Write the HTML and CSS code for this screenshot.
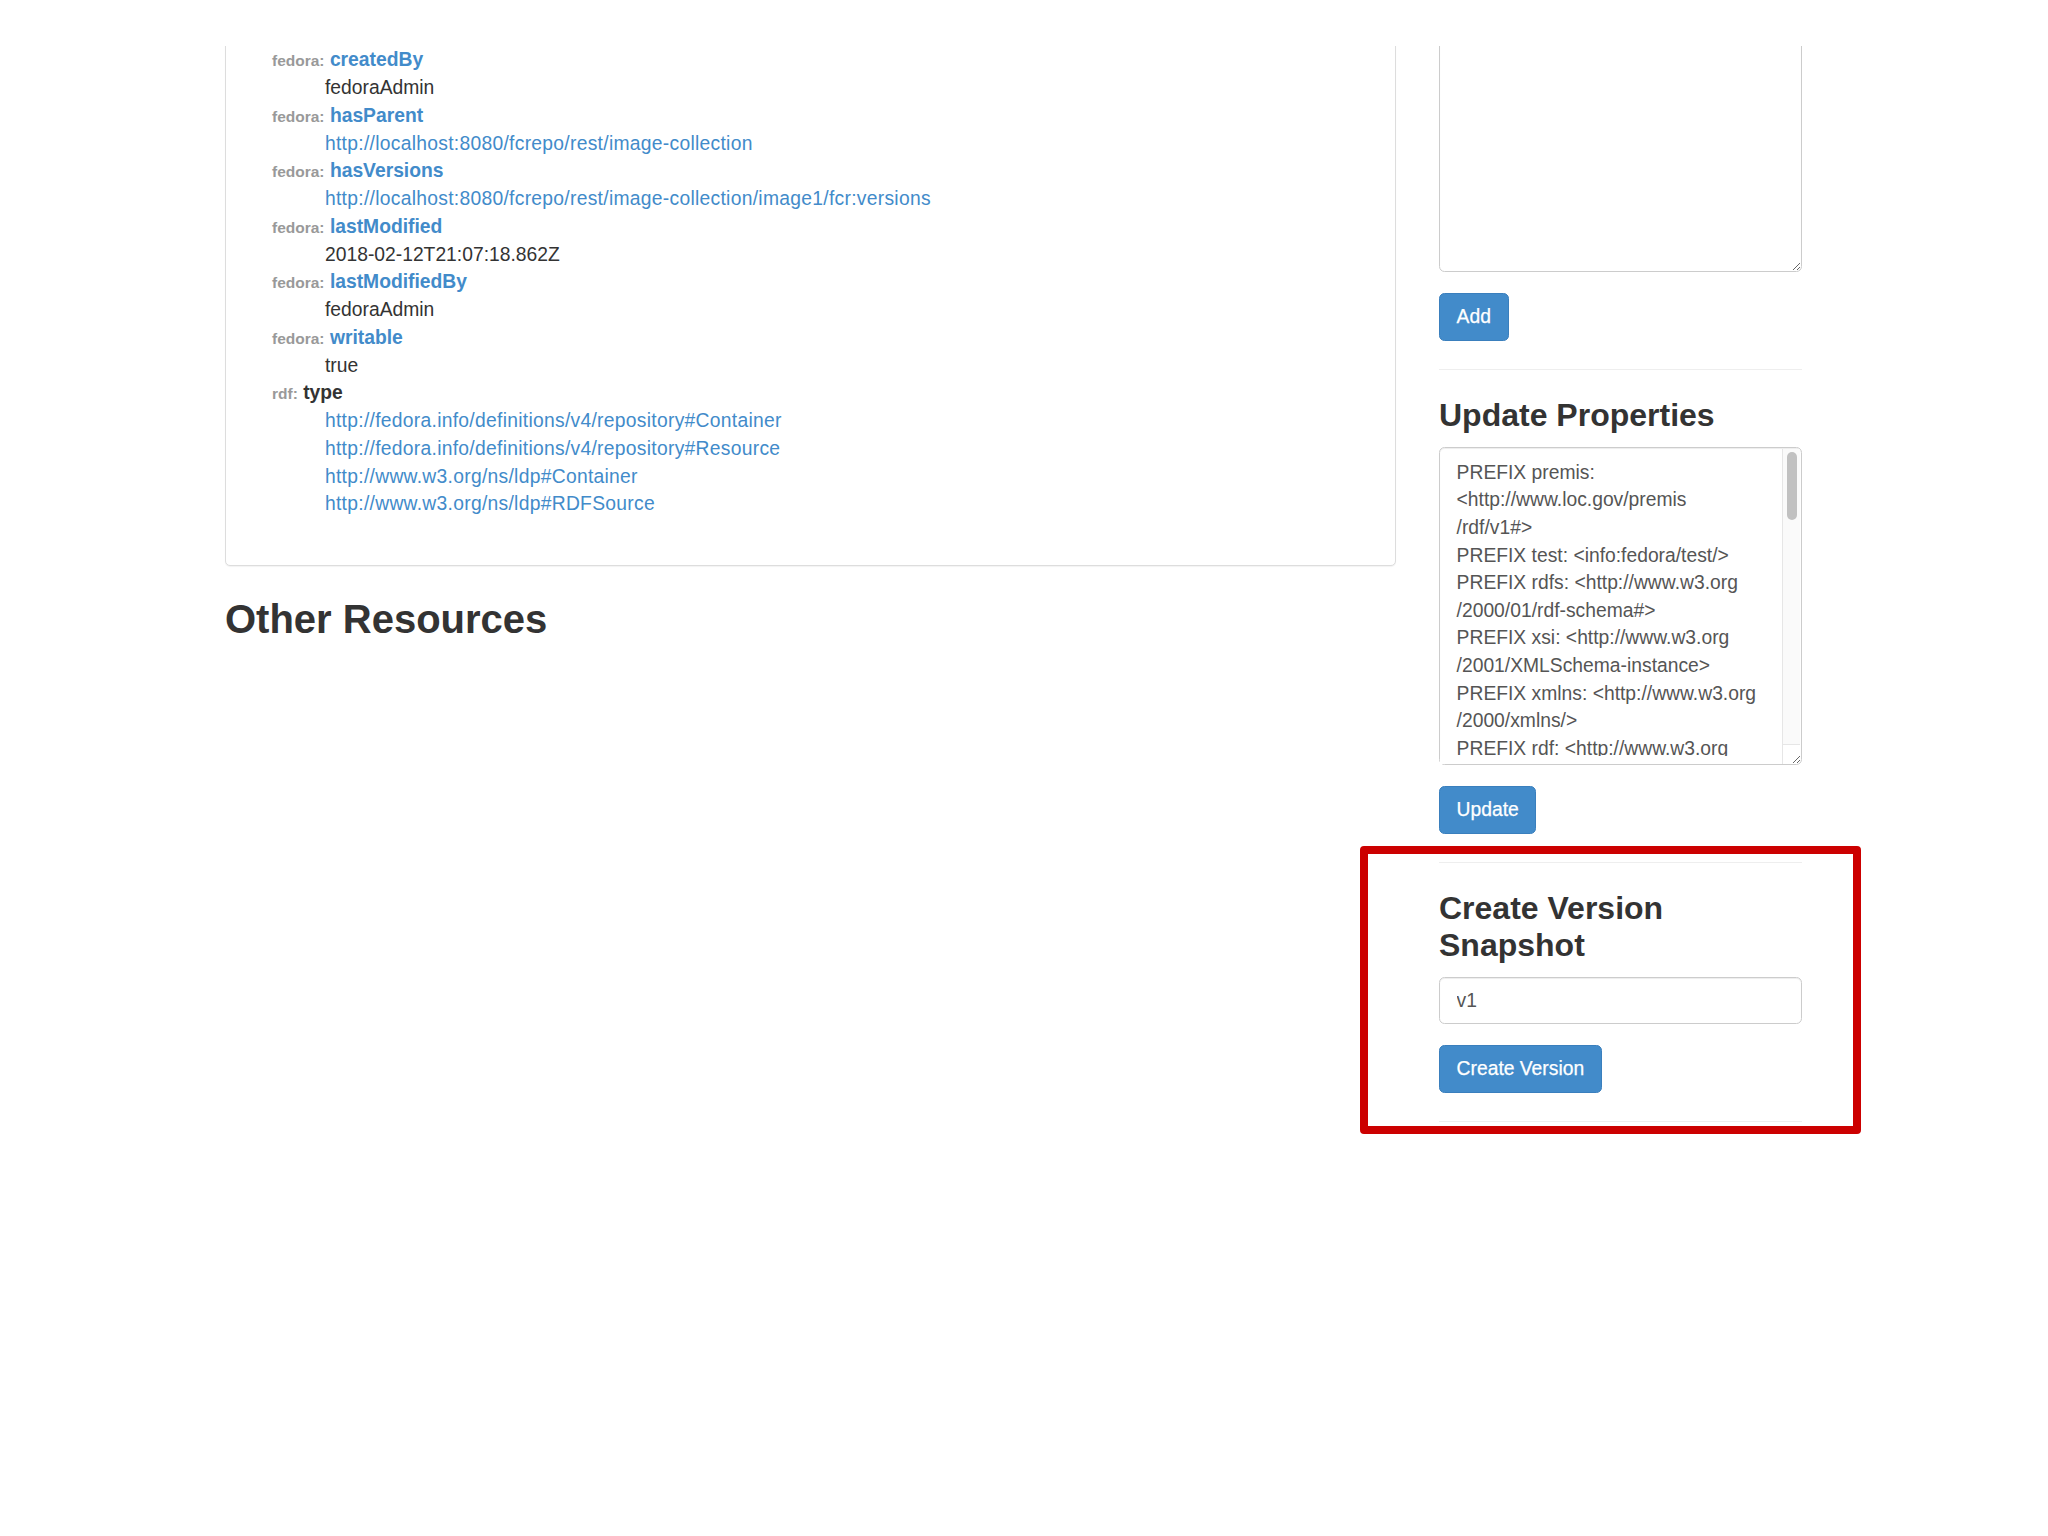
FILE: index.html
```html
<!DOCTYPE html>
<html lang="en">
<head>
  <meta charset="UTF-8" />
  <meta name="viewport" content="width=device-width, initial-scale=1.0"/>
  <title>image1 - Fedora</title>
  <link rel="stylesheet" href="styles.css">
</head>
<body>
  <div class="topbar"></div>

  <div class="page">
    <div class="main">
      <div class="panel">
        <div class="panel-body">
          <dl class="props">
            <dd>2018-02-12T21:07:18.862Z</dd>
            <dt><small>fedora:</small> <a href="#">createdBy</a></dt>
            <dd>fedoraAdmin</dd>
            <dt><small>fedora:</small> <a href="#">hasParent</a></dt>
            <dd><a href="#">http://localhost:8080/fcrepo/rest/image-collection</a></dd>
            <dt><small>fedora:</small> <a href="#">hasVersions</a></dt>
            <dd><a href="#">http://localhost:8080/fcrepo/rest/image-collection/image1/fcr:versions</a></dd>
            <dt><small>fedora:</small> <a href="#">lastModified</a></dt>
            <dd>2018-02-12T21:07:18.862Z</dd>
            <dt><small>fedora:</small> <a href="#">lastModifiedBy</a></dt>
            <dd>fedoraAdmin</dd>
            <dt><small>fedora:</small> <a href="#">writable</a></dt>
            <dd>true</dd>
            <dt><small>rdf:</small> type</dt>
            <dd><a href="#">http://fedora.info/definitions/v4/repository#Container</a></dd>
            <dd><a href="#">http://fedora.info/definitions/v4/repository#Resource</a></dd>
            <dd><a href="#">http://www.w3.org/ns/ldp#Container</a></dd>
            <dd><a href="#">http://www.w3.org/ns/ldp#RDFSource</a></dd>
          </dl>
        </div>
      </div>

      <h2>Other Resources</h2>
    </div>

    <aside class="side">
      <form class="form-group">
        <textarea class="form-control add-area"></textarea>
      </form>
      <button class="btn">Add</button>

      <hr>

      <h3>Update Properties</h3>
      <form class="form-group">
        <div class="area-wrap">
          <textarea class="form-control sparql">PREFIX premis:
&lt;http://www.loc.gov/premis
/rdf/v1#&gt;
PREFIX test: &lt;info:fedora/test/&gt;
PREFIX rdfs: &lt;http://www.w3.org
/2000/01/rdf-schema#&gt;
PREFIX xsi: &lt;http://www.w3.org
/2001/XMLSchema-instance&gt;
PREFIX xmlns: &lt;http://www.w3.org
/2000/xmlns/&gt;
PREFIX rdf: &lt;http://www.w3.org
/1999/02/22-rdf-syntax-ns#&gt;
PREFIX fedora:
&lt;http://fedora.info/definitions
/v4/repository#&gt;
PREFIX xml: &lt;http://www.w3.org
/XML/1998/namespace&gt;
PREFIX ebucore:
&lt;http://www.ebu.ch/metadata
/ontologies/ebucore/ebucore#&gt;
PREFIX ldp: &lt;http://www.w3.org
/ns/ldp#&gt;
PREFIX xs: &lt;http://www.w3.org
/2001/XMLSchema&gt;
PREFIX fedoraconfig:
&lt;http://fedora.info/definitions
/v4/config#&gt;
PREFIX foaf: &lt;http://xmlns.com
/foaf/0.1/&gt;
PREFIX dc: &lt;http://purl.org/dc
/elements/1.1/&gt;

DELETE { }
INSERT {
&lt;&gt; fedora:lastModifiedBy
"fedoraAdmin" .
&lt;&gt; fedora:createdBy
"fedoraAdmin" .
&lt;&gt; fedora:writable true .
&lt;&gt; fedora:hasParent
&lt;http://localhost:8080/fcrepo
/rest/image-collection&gt; .
}
WHERE { }</textarea>
          <div class="scrollbar"><div class="thumb"></div></div>
          <div class="scroll-corner"></div>
        </div>
      </form>
      <button class="btn">Update</button>

      <div class="snapshot">
        <hr>
        <h3>Create Version Snapshot</h3>
        <form class="form-group">
          <input type="text" class="form-control" value="v1">
        </form>
        <button class="btn">Create Version</button>
        <hr>
      </div>
    </aside>
  </div>
</body>
</html>
```

FILE: styles.css
```css
body {
  margin: 0;
  padding-bottom: 120px;
  background-color: #fff;
  color: #333;
  font-family: "Liberation Sans", Helvetica, Arial, sans-serif;
  font-size: 19.3px;
  line-height: 27.6px;
}

a {
  color: #428bca;
  text-decoration: none;
}

/* blank bar the page scrolls under */
.topbar {
  position: fixed;
  top: 0;
  left: 0;
  right: 0;
  height: 46px;
  background-color: #fff;
  z-index: 10;
}

.page {
  display: flex;
  gap: 43px;
  margin-left: 225px;
}

.main {
  width: 1171px;
}

.side {
  width: 363px;
}

.panel {
  background-color: #fff;
  border: 1px solid #ddd;
  border-radius: 5px;
  box-shadow: 0 1px 1px rgba(0, 0, 0, 0.05);
  margin-bottom: 27.6px;
}

.panel-body {
  padding: 17.6px 20.7px 20.7px;
}

.props {
  margin: 0 0 26px;
  padding-left: 25.3px;
}

.props dt,
.props dd {
  height: 27.75px;
}

.props dt {
  font-weight: bold;
}

.props dt small {
  font-size: 15.5px;
  color: #999;
}

.props dd {
  margin-left: 53px;
}

.props dd a {
  letter-spacing: 0.28px;
}

h2, h3 {
  font-weight: bold;
  color: #333;
  margin: 0;
}

h2 {
  font-size: 40px;
  line-height: 45.5px;
  margin-top: 31.5px;
}

h3 {
  font-size: 32px;
  line-height: 36.4px;
  margin: 27px 0 13.8px;
}

hr {
  border: 0;
  border-top: 1px solid #eee;
  margin: 28.5px 0 0;
}

.form-group {
  margin: 0 0 21px;
}

.form-control {
  display: block;
  width: 100%;
  box-sizing: border-box;
  padding: 8.3px 16.6px;
  font-family: inherit;
  font-size: 19.3px;
  line-height: 27.6px;
  color: #555;
  background-color: #fff;
  border: 1.4px solid #ccc;
  border-radius: 5.5px;
  box-shadow: inset 0 1px 1px rgba(0, 0, 0, 0.075);
}

input.form-control {
  height: 47px;
}

.add-area {
  height: 272px;
}

.area-wrap {
  position: relative;
}

.sparql {
  height: 318px;
  padding-top: 10.5px;
  white-space: pre-wrap;
  overflow-y: hidden;
}

/* text is clipped at the content edge, not under the bottom padding */
.area-wrap::after {
  content: "";
  position: absolute;
  left: 1.4px;
  right: 20px;
  bottom: 1.4px;
  height: 8px;
  background-color: #fff;
}

/* drawn scrollbar over the right edge of the textarea */
.scrollbar {
  position: absolute;
  top: 1.4px;
  right: 2px;
  bottom: 20px;
  width: 17px;
  background-color: #fafafa;
  border-left: 1px solid #e6e6e6;
}

.thumb {
  margin: 3px 3px 0 4px;
  height: 68px;
  background-color: #c1c1c1;
  border-radius: 6px;
}

.scroll-corner {
  position: absolute;
  right: 2px;
  bottom: 1.4px;
  width: 17px;
  height: 18.6px;
  border-top: 1px solid #e6e6e6;
  border-left: 1px solid #e6e6e6;
}

.btn {
  display: inline-block;
  padding: 9px 16.6px;
  font-family: inherit;
  font-size: 19.3px;
  line-height: 27.6px;
  color: #fff;
  background-color: #428bca;
  border: 1.4px solid #3a7fbd;
  border-radius: 5.5px;
  -webkit-text-stroke: 0.25px #fff;
  cursor: pointer;
}

/* section highlighted with a red frame */
.snapshot {
  position: relative;
  display: flow-root;
  padding-bottom: 28px;
}

.snapshot::before {
  content: "";
  position: absolute;
  top: 12px;
  left: -79px;
  right: -59px;
  bottom: 16px;
  border: 8px solid #cc0000;
  border-radius: 4px;
  pointer-events: none;
}
```
